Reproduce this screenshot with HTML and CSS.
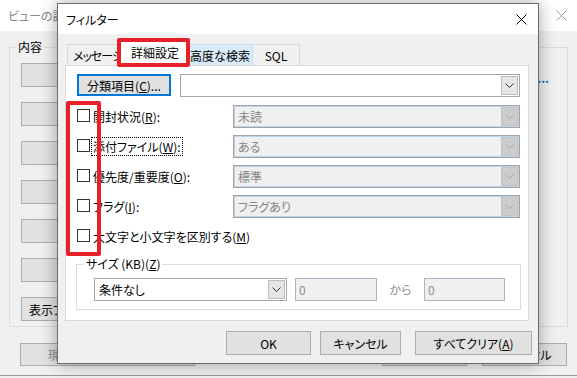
FILE: index.html
```html
<!DOCTYPE html>
<html lang="ja">
<head>
    <meta charset="UTF-8">
    <title>フィルター</title>
    <link rel="stylesheet" href="styles.css">
</head>
<body>
<div class="desktop">
    <!-- Background window -->
    <div class="bg-window">
        <div class="bg-titlebar">
            <span class="bg-title">ビューの詳細設定</span>
            <svg class="bg-close" width="11" height="11" viewBox="0 0 11 11"><path d="M0.5 0.5 L10.5 10.5 M10.5 0.5 L0.5 10.5" stroke="#9a9a9a" stroke-width="1"/></svg>
        </div>
        <div class="bg-body">
            <fieldset class="bg-group">
                <legend>内容</legend>
                <div class="bg-row"><button class="bg-btn">列(C)...</button><span class="bg-link">...</span></div>
                <div class="bg-row"><button class="bg-btn">グループ化(G)...</button></div>
                <div class="bg-row"><button class="bg-btn">並べ替え(S)...</button></div>
                <div class="bg-row"><button class="bg-btn">フィルター(F)...</button></div>
                <div class="bg-row"><button class="bg-btn">その他の設定(M)...</button></div>
                <div class="bg-row"><button class="bg-btn">条件付き書式(D)...</button></div>
                <div class="bg-row"><button class="bg-btn fit">表示フォーマット(O)...</button></div>
            </fieldset>
            <div class="bg-footer">
                <button class="bg-btn reset" disabled>現在のビューをリセット</button>
                <div class="bg-footer-right">
                    <button class="bg-btn small">OK</button>
                    <button class="bg-btn small">キャンセル</button>
                </div>
            </div>
        </div>
    </div>

    <!-- Filter dialog -->
    <div class="dialog">
        <div class="titlebar">
            <span class="title">フィルター</span>
            <svg class="close" width="11" height="11" viewBox="0 0 11 11"><path d="M0.5 0.5 L10.5 10.5 M10.5 0.5 L0.5 10.5" stroke="#000" stroke-width="1"/></svg>
        </div>
        <div class="dialog-body">
            <div class="tabs">
                <div class="tab first"><span>メッセージ</span></div>
                <div class="tab active">詳細設定</div>
                <div class="tab hover">高度な検索</div>
                <div class="tab sql">SQL</div>
            </div>
            <div class="panel">
                <div class="top-row">
                    <button class="btn focus">分類項目(<u>C</u>)...</button>
                    <div class="combo wide">
                        <span class="combo-text"></span>
                        <span class="dd-btn"><svg width="9" height="5" viewBox="0 0 9 5"><polyline points="0.5,0.5 4.5,4.5 8.5,0.5" fill="none" stroke="#333"/></svg></span>
                    </div>
                </div>

                <div class="rows">
                    <div class="row">
                        <span class="check"></span>
                        <span class="label">開封状況(<u>R</u>):</span>
                        <div class="combo disabled">
                            <span class="combo-text">未読</span>
                            <span class="dd-btn"><svg width="9" height="5" viewBox="0 0 9 5"><polyline points="0.5,0.5 4.5,4.5 8.5,0.5" fill="none" stroke="#a8a8a8"/></svg></span>
                        </div>
                    </div>
                    <div class="row">
                        <span class="check"></span>
                        <span class="label dotted">添付ファイル(<u>W</u>):</span>
                        <div class="combo disabled">
                            <span class="combo-text">ある</span>
                            <span class="dd-btn"><svg width="9" height="5" viewBox="0 0 9 5"><polyline points="0.5,0.5 4.5,4.5 8.5,0.5" fill="none" stroke="#a8a8a8"/></svg></span>
                        </div>
                    </div>
                    <div class="row">
                        <span class="check"></span>
                        <span class="label">優先度/重要度(<u>O</u>):</span>
                        <div class="combo disabled">
                            <span class="combo-text">標準</span>
                            <span class="dd-btn"><svg width="9" height="5" viewBox="0 0 9 5"><polyline points="0.5,0.5 4.5,4.5 8.5,0.5" fill="none" stroke="#a8a8a8"/></svg></span>
                        </div>
                    </div>
                    <div class="row">
                        <span class="check"></span>
                        <span class="label">フラグ(<u>I</u>):</span>
                        <div class="combo disabled">
                            <span class="combo-text">フラグあり</span>
                            <span class="dd-btn"><svg width="9" height="5" viewBox="0 0 9 5"><polyline points="0.5,0.5 4.5,4.5 8.5,0.5" fill="none" stroke="#a8a8a8"/></svg></span>
                        </div>
                    </div>
                    <div class="row">
                        <span class="check"></span>
                        <span class="label">大文字と小文字を区別する(<u>M</u>)</span>
                    </div>
                </div>

                <fieldset class="size-group">
                    <legend>サイズ (KB)(<u>Z</u>)</legend>
                    <div class="size-row">
                        <div class="combo size">
                            <span class="combo-text">条件なし</span>
                            <span class="dd-btn"><svg width="9" height="5" viewBox="0 0 9 5"><polyline points="0.5,0.5 4.5,4.5 8.5,0.5" fill="none" stroke="#333"/></svg></span>
                        </div>
                        <span class="num">0</span>
                        <span class="kara">から</span>
                        <span class="num second">0</span>
                    </div>
                </fieldset>
            </div>

            <div class="footer">
                <button class="btn ok">OK</button>
                <button class="btn cancel">キャンセル</button>
                <button class="btn clear">すべてクリア(<u>A</u>)</button>
            </div>
        </div>
    </div>

    <!-- Red annotation boxes -->
    <div class="mark mark-tab"></div>
    <div class="mark mark-checks"></div>
</div>
</body>
</html>
```

FILE: styles.css
```css
/* Base */
body {
    margin: 0;
    background: #f0f0f0;
    font-family: "Noto Sans CJK JP", "Noto Sans", sans-serif;
    font-size: 12px;
    font-feature-settings: "palt" 1;
    color: #000;
}

button {
    font-family: inherit;
    font-size: 12px;
    font-feature-settings: "palt" 1;
    color: #000;
    padding: 0;
    margin: 0;
    box-sizing: border-box;
}

u {
    text-decoration: underline;
    text-underline-offset: 1px;
}

.desktop {
    position: relative;
    width: 577px;
    height: 378px;
    overflow: hidden;
}

/* Background window */
.bg-window {
    width: 577px;
    height: 376px;
    box-sizing: border-box;
    border-bottom: 1px solid #9a9a9a;
    background: #f0f0f0;
}

.bg-titlebar {
    height: 31px;
    background: #fff;
    display: flex;
    align-items: center;
    padding: 0 8px 0 8px;
    box-sizing: border-box;
}

.bg-title {
    color: #8a8a8a;
    flex: 1;
}

.bg-close {
    margin-right: 2px;
}

.bg-body {
    padding: 8px 9px 0 9px;
}

.bg-group {
    margin: 0;
    padding: 8px 18px 5px 11px;
    border: 1px solid #dcdcdc;
    display: flex;
    flex-direction: column;
    gap: 15px;
}

.bg-group legend {
    padding: 0 2px;
    margin-left: -5px;
    line-height: 16px;
}

.bg-row {
    display: flex;
    align-items: center;
    height: 24px;
}

.bg-btn {
    width: 240px;
    height: 24px;
    background: #e1e1e1;
    border: 1px solid #adadad;
    white-space: nowrap;
}

.bg-btn.fit {
    width: auto;
    padding: 0 7px;
}

.bg-link {
    margin-left: auto;
    color: #1a5fb4;
    font-weight: bold;
    margin-top: 4px;
}

.bg-footer {
    display: flex;
    margin-top: 16px;
    padding: 0 1px 0 11px;
}

.bg-btn.reset {
    width: 175px;
    height: 23px;
    color: #8a8a8a;
}

.bg-footer-right {
    margin-left: auto;
    display: flex;
    gap: 15px;
}

.bg-btn.small {
    width: 85px;
    height: 23px;
}

/* Filter dialog */
.dialog {
    position: absolute;
    left: 57px;
    top: 3px;
    width: 482px;
    height: 361px;
    box-sizing: border-box;
    border: 1px solid #6c6c6c;
    background: #f0f0f0;
    box-shadow: 0 0 16px rgba(0, 0, 0, 0.35);
    z-index: 2;
}

.titlebar {
    height: 30px;
    background: #fff;
    display: flex;
    align-items: center;
    padding: 0 8px 0 8px;
}

.title {
    flex: 1;
}

.close {
    margin-right: 3px;
}

.dialog-body {
    padding: 5px 9px 0 7px;
}

/* Tabs */
.tabs {
    display: flex;
    align-items: flex-end;
    height: 26px;
    padding-left: 2px;
    position: relative;
    z-index: 1;
}

.tab {
    height: 21px;
    box-sizing: border-box;
    border: 1px solid #d9d9d9;
    border-bottom: none;
    background: #f0f0f0;
    display: flex;
    align-items: center;
    justify-content: center;
    white-space: nowrap;
    overflow: hidden;
}

.tab.first {
    width: 55px;
    justify-content: flex-start;
    padding-left: 5px;
    letter-spacing: -1px;
}

.tab.active {
    width: 70px;
    height: 27px;
    margin: 0 -2px -1px -2px;
    background: #fff;
    position: relative;
    padding-bottom: 2px;
}

.tab.hover {
    width: 65px;
    background: #d9eaf9;
    border-color: #c5dcf2;
    border-left: none;
}

.tab.sql {
    width: 47px;
    border-left: none;
}

.panel {
    height: 256px;
    box-sizing: border-box;
    background: #fff;
    border: 1px solid #d9d9d9;
    padding: 8px 8px 0 11px;
}

.top-row {
    display: flex;
    align-items: flex-start;
    height: 23px;
}

.btn {
    background: #e1e1e1;
    border: 1px solid #adadad;
    height: 24px;
}

.btn.focus {
    width: 94px;
    height: 22px;
    border-color: #0078d7;
    box-shadow: inset 0 0 0 1px #0078d7;
}

/* Combo boxes */
.combo {
    display: flex;
    align-items: stretch;
    height: 23px;
    box-sizing: border-box;
    border: 1px solid #a5a5a5;
    background: #fff;
}

.combo.wide {
    width: 340px;
    margin-left: 9px;
}

.combo-text {
    flex: 1;
    display: flex;
    align-items: center;
    padding-left: 4px;
    white-space: nowrap;
}

.dd-btn {
    width: 17px;
    margin: 1px;
    box-sizing: border-box;
    border: 1px solid #bcbcbc;
    background: #e6e6e6;
    display: flex;
    align-items: center;
    justify-content: center;
}

.combo.disabled {
    width: 287px;
    margin-left: auto;
    background: #f0f0f0;
    border-color: #a3a3a3;
    box-shadow: inset 0 0 0 1px #bdd3ec;
    color: #858585;
}

.combo.disabled .dd-btn {
    background: #cccccc;
    border-color: #c4c4c4;
}

/* Checkbox rows */
.rows {
    margin-top: 8px;
    display: flex;
    flex-direction: column;
    gap: 7px;
}

.row {
    display: flex;
    align-items: center;
    height: 23px;
}

.check {
    width: 13px;
    height: 13px;
    box-sizing: border-box;
    border: 1px solid #333;
    background: #fff;
    margin-top: -2px;
}

.label {
    margin-left: 2px;
    padding: 0 1px;
    white-space: nowrap;
}

.label.dotted {
    outline: 1px dotted #000;
}

/* Size group */
.size-group {
    margin: 8px 0 0 -1px;
    width: 445px;
    box-sizing: border-box;
    padding: 6px 0 8px 17px;
    border: 1px solid #dcdcdc;
}

.size-group legend {
    padding: 0 2px;
    margin-left: -10px;
    line-height: 16px;
}

.size-row {
    display: flex;
    align-items: center;
}

.combo.size {
    width: 193px;
}

.num {
    width: 82px;
    height: 23px;
    box-sizing: border-box;
    margin-left: 8px;
    border: 1px solid #a9b6c6;
    background: #f0f0f0;
    color: #8d8d8d;
    padding-left: 3px;
    display: flex;
    align-items: center;
}

.num.second {
    width: 81px;
    margin-left: 0;
}

.kara {
    width: 47px;
    text-align: center;
    color: #8d8d8d;
}

/* Footer buttons */
.footer {
    display: flex;
    justify-content: flex-end;
    margin: 10px -3px 0 0;
}

.btn.ok {
    width: 85px;
}

.btn.cancel {
    width: 81px;
    margin-left: 9px;
}

.btn.clear {
    width: 117px;
    margin-left: 14px;
}

/* Red annotation boxes */
.mark {
    position: absolute;
    box-sizing: border-box;
    border: 4px solid #e8202a;
    border-radius: 2px;
    z-index: 3;
}

.mark-tab {
    left: 117px;
    top: 38px;
    width: 73px;
    height: 29px;
}

.mark-checks {
    left: 66px;
    top: 101px;
    width: 35px;
    height: 155px;
}
```
